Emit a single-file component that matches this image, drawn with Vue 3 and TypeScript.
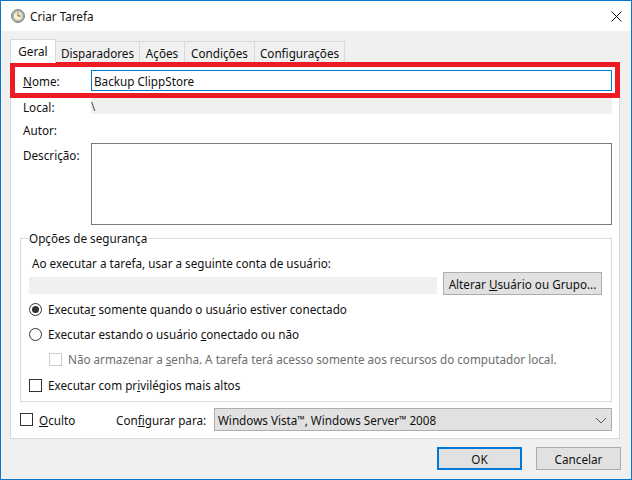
<script setup lang="ts">
const tabs: string[] = ['Disparadores', 'Ações', 'Condições', 'Configurações']
</script>

<template>
  <div class="window">
    <header class="titlebar">
      <svg class="clock" width="14" height="14" viewBox="0 0 14 14">
        <circle cx="7" cy="7" r="6.4" fill="#b9bcbc" stroke="#6f7473" stroke-width="1" />
        <circle cx="7" cy="7" r="4.6" fill="#f7f0cf" stroke="#9a9d9c" stroke-width="0.6" />
        <path d="M7 3.6V7H10" fill="none" stroke="#6b6b55" stroke-width="1" />
      </svg>
      <span class="title">Criar Tarefa</span>
      <svg class="close" width="11" height="11" viewBox="0 0 11 11">
        <path d="M0.5 0.5L10.5 10.5M10.5 0.5L0.5 10.5" stroke="#111" stroke-width="1" fill="none" />
      </svg>
    </header>

    <div class="content">
      <nav class="tabs">
        <div class="tab active">Geral</div>
        <div v-for="t in tabs" :key="t" class="tab" :class="'tab-' + t.length">{{ t }}</div>
      </nav>

      <section class="panel">
        <div class="row first">
          <label class="lbl"><u>N</u>ome:</label>
          <input class="name" value="Backup ClippStore" />
        </div>
        <div class="row local">
          <label class="lbl">Local:</label>
          <div class="readonly">\</div>
        </div>
        <div class="row author">
          <label class="lbl">Autor:</label>
        </div>
        <div class="row descr">
          <label class="lbl">Descrição:</label>
          <div class="textarea"></div>
        </div>

        <fieldset class="group">
          <legend>Opções de segurança</legend>
          <p class="account">Ao executar a tarefa, usar a seguinte conta de usuário:</p>
          <div class="account-row">
            <div class="account-field"></div>
            <button class="btn change">Alterar <u>U</u>suário ou Grupo...</button>
          </div>
          <div class="opt opt-r1"><span class="radio on"></span><span>Executa<u>r</u> somente quando o usuário estiver conectado</span></div>
          <div class="opt opt-r2"><span class="radio"></span><span>Executar estando o usuário <u>c</u>onectado ou não</span></div>
          <div class="opt opt-c1 disabled"><span class="check"></span><span>Não armazenar a <u>s</u>enha. A tarefa terá acesso somente aos recursos do computador local.</span></div>
          <div class="opt opt-c2"><span class="check"></span><span>Executar com pr<u>i</u>vilégios mais altos</span></div>
        </fieldset>

        <div class="bottom">
          <div class="opt hidden-opt"><span class="check"></span><span><u>O</u>culto</span></div>
          <span class="cfg">Con<u>f</u>igurar para:</span>
          <div class="select">
            <span>Windows Vista<span class="tm">™</span>, Windows Server<span class="tm">™</span> 2008</span>
            <svg width="12" height="7" viewBox="0 0 12 7"><path d="M1 1L6 6L11 1" fill="none" stroke="#555" stroke-width="1" /></svg>
          </div>
        </div>
      </section>

      <footer class="footer">
        <button class="btn ok">OK</button>
        <button class="btn cancel">Cancelar</button>
      </footer>
    </div>

    <div class="highlight"></div>
  </div>
</template>

<style>
html, body { margin: 0; padding: 0; }
</style>

<style scoped>
.window {
  position: relative;
  box-sizing: border-box;
  width: 632px;
  height: 480px;
  border: 1px solid #0b78d0;
  background: #f0f0f0;
  font-family: "Noto Sans", "Open Sans", sans-serif;
  font-size: 11.7px;
  line-height: 16px;
  color: #111;
  overflow: hidden;
}
.titlebar {
  height: 30px;
  background: #fff;
  display: flex;
  align-items: center;
  padding: 0 9px 0 10px;
}
.title { margin-left: 5px; }
.close { margin-left: auto; }
.content { display: flex; flex-direction: column; }
.tabs {
  display: flex;
  align-items: flex-end;
  height: 31px;
  margin-left: 9px;
  position: relative;
  z-index: 1;
}
.tab {
  box-sizing: border-box;
  height: 21px;
  border: 1px solid #d9d9d9;
  border-bottom: none;
  border-left: none;
  background: #f0f0f0;
  display: flex;
  align-items: center;
  justify-content: center;
  width: 70px;
  padding-top: 2px;
}
.tab.active {
  width: 46px;
  height: 24px;
  margin-bottom: -1px;
  border-left: 1px solid #d9d9d9;
  background: #fff;
  padding: 0 0 2px;
}
.tab-12 { width: 84px; }
.tab-5 { width: 45px; }
.tab-9 { width: 70px; }
.tab-13 { width: 90px; }
.panel {
  box-sizing: border-box;
  width: 610px;
  height: 377px;
  margin-left: 9px;
  border: 1px solid #d9d9d9;
  background: #fff;
  padding: 7px 7px 0 12px;
}
.row { display: flex; }
.lbl { width: 68px; flex: none; }
.first { height: 21px; align-items: center; }
.name {
  flex: 1;
  box-sizing: border-box;
  height: 21px;
  min-width: 0;
  border: 1px solid #0078d7;
  padding: 0 2px;
  font: inherit;
  color: inherit;
  outline: none;
}
.local { margin-top: 7px; height: 16px; }
.local .lbl { padding-top: 1px; }
.readonly {
  flex: 1;
  height: 16px;
  background: #f0f0f0;
  line-height: 16px;
  overflow: hidden;
  color: #444;
}
.author { margin-top: 8px; height: 16px; }
.descr { margin-top: 5px; }
.descr .lbl { padding-top: 4px; }
.textarea {
  flex: 1;
  box-sizing: border-box;
  height: 82px;
  border: 1px solid #7a7a7a;
}
.group {
  margin: 5px 0 0 -3px;
  box-sizing: border-box;
  height: 172px;
  border: 1px solid #dcdcdc;
  padding: 0 8px;
  min-width: 0;
}
.group legend { padding: 0 1px; margin-left: -1px; }
.account { margin: 9px 0 0 3px; }
.account-row { display: flex; align-items: center; margin-top: 1px; height: 23px; }
.account-field { width: 408px; height: 17px; background: #f0f0f0; margin-top: 3px; }
.btn {
  box-sizing: border-box;
  height: 23px;
  border: 1px solid #adadad;
  background: #e1e1e1;
  font: inherit;
  color: inherit;
  padding: 1px 0 0;
}
.change { width: 159px; margin-left: 6px; }
.opt { display: flex; align-items: center; height: 16px; }
.opt-r1 { margin-top: 6px; }
.opt-r2 { margin-top: 9px; }
.opt-c1 { margin: 9px 0 0 20px; color: #6d6d6d; }
.opt-c2 { margin-top: 10px; }
.radio, .check {
  box-sizing: border-box;
  flex: none;
  width: 13px;
  height: 13px;
  border: 1px solid #333;
  margin-right: 6px;
  background: #fff;
}
.radio { border-radius: 50%; position: relative; }
.radio.on::after {
  content: "";
  position: absolute;
  left: 2px;
  top: 2px;
  width: 7px;
  height: 7px;
  border-radius: 50%;
  background: #333;
}
.disabled .check { border-color: #ccc; }
.bottom { display: flex; align-items: center; margin: 6px 0 0 -3px; height: 23px; }
.hidden-opt { width: 96px; flex: none; }
.cfg { width: 98px; flex: none; padding-top: 1px; }
.tm { font-size: 9.5px; vertical-align: 2px; line-height: 0; }
.select {
  flex: 1;
  box-sizing: border-box;
  height: 23px;
  border: 1px solid #adadad;
  background: #e1e1e1;
  display: flex;
  align-items: center;
  justify-content: space-between;
  padding: 1px 4px 0 3px;
}
.footer {
  display: flex;
  justify-content: flex-end;
  gap: 14px;
  margin-top: 8px;
  padding-right: 10px;
}
.ok, .cancel { width: 85px; }
.ok { border: 2px solid #0078d7; }
.highlight {
  position: absolute;
  left: 9px;
  top: 61px;
  width: 610px;
  height: 36px;
  box-sizing: border-box;
  border: 5px solid #ed1c24;
  pointer-events: none;
}
</style>
